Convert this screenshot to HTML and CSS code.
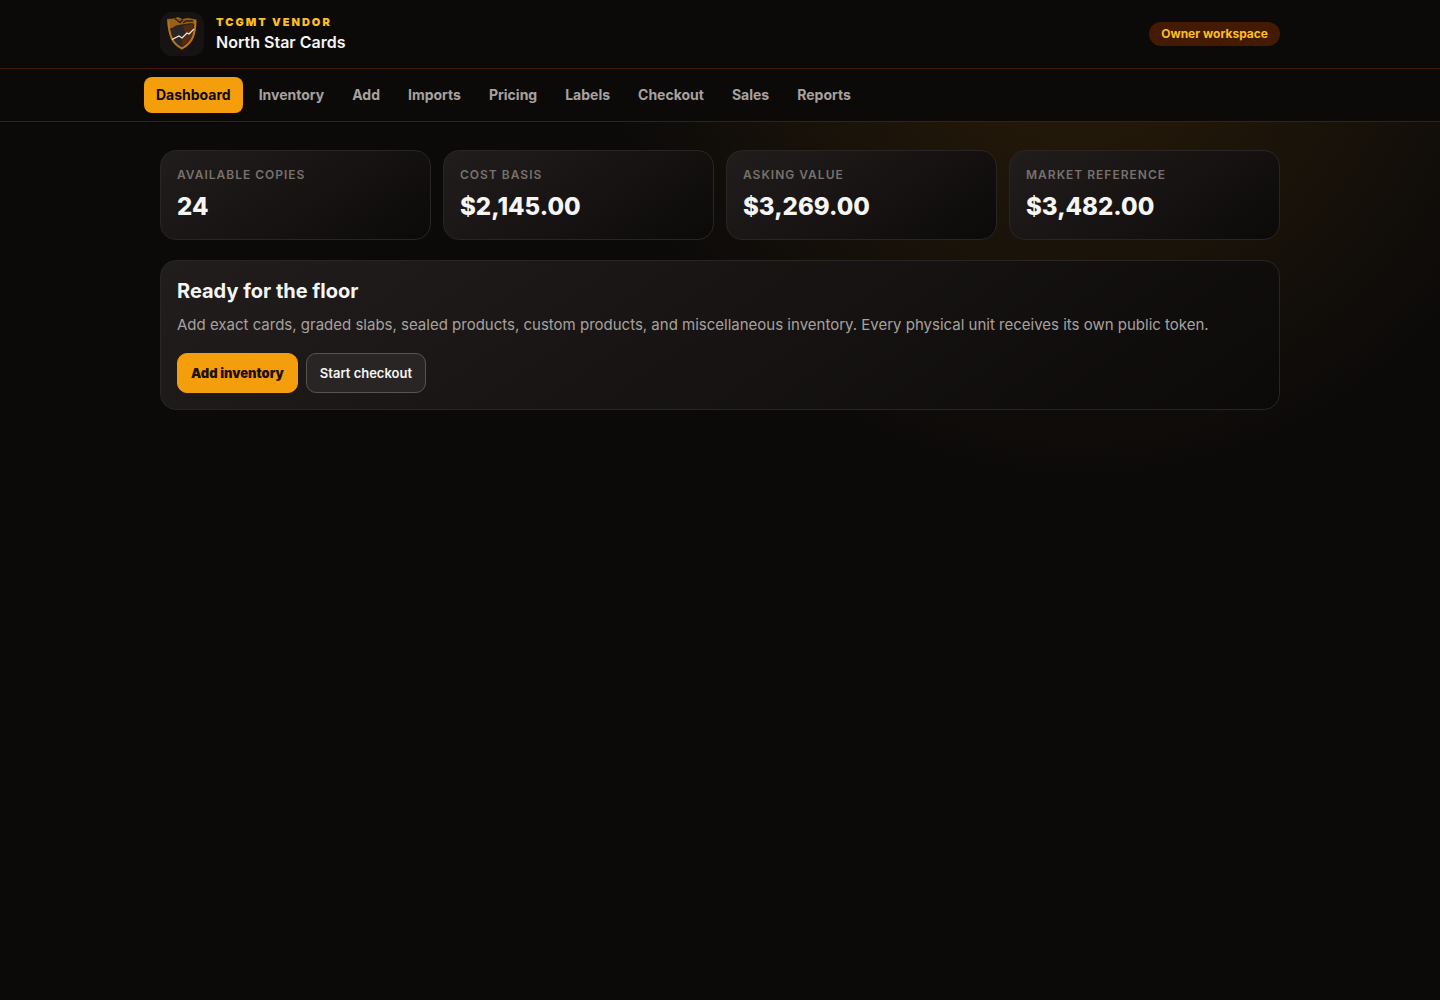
FILE: index.html
```html
<!DOCTYPE html>
<html lang="en">
<head>
<meta charset="utf-8">
<meta name="viewport" content="width=device-width, initial-scale=1">
<title>North Star Cards – TCGMT Vendor</title>
<link rel="stylesheet" href="styles.css">
</head>
<body>
<header class="site-header">
  <div class="container header-row">
    <div class="brand">
      <svg class="logo" viewBox="0 0 44 44" aria-hidden="true">
        <rect width="44" height="44" rx="12" fill="#171312"/>
        <path d="M8 9L21 12 35 9Q36 18 32.500 27 28.500 34 22 37.500 14 33 11 26 8 18 8 9Z" fill="#2b2625"/>
        <path d="M23 14l10-2Q34 22 30 29L22 34 22 25 26 23Z" fill="#532b10"/>
        <path d="M7 7L14 6.500 18 5 22 7 28 6 36.500 7.500 35.500 12 31 11 21 12.500 16 13.500 12 16 8 16Z" fill="#9a6017"/>
        <path d="M8.500 9Q8.500 19 12 27 15 33 22 36.500 30 32 33 25 35.500 18 35.500 8.500" fill="none" stroke="#b67318" stroke-width="2"/>
        <path d="M15 6.500l5 4 3-3M23 11l3-2 7 0" fill="none" stroke="#2b1b10" stroke-width="1.500"/>
        <path d="M12 27.500L19 24 22 26 27 21 29 22 34 17" fill="none" stroke="#eeeae6" stroke-width="1.200"/>
      </svg>
      <div class="brand-text">
        <span class="eyebrow">TCGMT VENDOR</span>
        <span class="shop-name">North Star Cards</span>
      </div>
    </div>
    <span class="badge">Owner workspace</span>
  </div>
</header>
<nav class="site-nav" aria-label="Main">
  <div class="container nav-row">
    <a class="nav-link active" href="#" aria-current="page">Dashboard</a>
    <a class="nav-link" href="#">Inventory</a>
    <a class="nav-link" href="#">Add</a>
    <a class="nav-link" href="#">Imports</a>
    <a class="nav-link" href="#">Pricing</a>
    <a class="nav-link" href="#">Labels</a>
    <a class="nav-link" href="#">Checkout</a>
    <a class="nav-link" href="#">Sales</a>
    <a class="nav-link" href="#">Reports</a>
  </div>
</nav>
<main class="container content">
  <section class="stats" aria-label="Inventory totals">
    <div class="card"><p class="stat-label">AVAILABLE COPIES</p><p class="stat-value">24</p></div>
    <div class="card"><p class="stat-label">COST BASIS</p><p class="stat-value">$2,145.00</p></div>
    <div class="card"><p class="stat-label">ASKING VALUE</p><p class="stat-value">$3,269.00</p></div>
    <div class="card"><p class="stat-label">MARKET REFERENCE</p><p class="stat-value">$3,482.00</p></div>
  </section>
  <section class="card">
    <h1 class="title">Ready for the floor</h1>
    <p class="lead">Add exact cards, graded slabs, sealed products, custom products, and miscellaneous inventory. Every physical unit receives its own public token.</p>
    <div class="actions">
      <button class="button primary" type="button">Add inventory</button>
      <button class="button secondary" type="button">Start checkout</button>
    </div>
  </section>
</main>
</body>
</html>
```
FILE: styles.css
```css
* { box-sizing: border-box; }
body {
  margin: 0;
  min-height: 100vh;
  color: #f5f5f4;
  font-family: Inter, "Liberation Sans", sans-serif;
  font-size: 16px;
  line-height: 24px;
  background: radial-gradient(circle at 75% 0, rgba(245, 158, 11, 0.13), transparent 480px) #0c0a09;
}
p, h1 { margin: 0; }
.container { width: 100%; max-width: 1152px; margin: 0 auto; padding: 0 16px; }
.site-header { background: #0c0a09; border-bottom: 1px solid #451a03; }
.header-row { display: flex; align-items: center; justify-content: space-between; padding-top: 12px; padding-bottom: 12px; }
.brand { display: flex; align-items: center; gap: 12px; }
.logo { width: 44px; height: 44px; }
.brand-text { display: flex; flex-direction: column; }
.eyebrow { color: #fbbf24; font-size: 11px; line-height: 16px; font-weight: 900; letter-spacing: 2px; }
.shop-name { font-weight: 600; }
.badge { padding: 4px 12px; border-radius: 12px; background: #451a03; color: #fbbf24; font-size: 12px; line-height: 16px; font-weight: 700; }
.site-nav { background: #0c0a09; border-bottom: 1px solid #292524; }
.nav-row { display: flex; gap: 4px; padding: 8px 0; }
.nav-link { padding: 8px 12px; border-radius: 8px; color: #a8a29e; font-size: 14px; line-height: 20px; font-weight: 700; text-decoration: none; }
.nav-link.active { background: #f59e0b; color: #0c0a09; }
.content { display: grid; gap: 20px; padding-top: 28px; padding-bottom: 28px; }
.stats { display: grid; grid-template-columns: repeat(4, 1fr); gap: 12px; }
.card { padding: 16px; border: 1px solid #292524; border-radius: 16px; background: linear-gradient(145deg, #211d1c, #0c0a09); }
.stat-label { color: #78716c; font-size: 12px; line-height: 16px; font-weight: 600; letter-spacing: 1px; }
.stat-value { margin-top: 8px; font-size: 24px; line-height: 32px; font-weight: 800; }
.title { font-size: 20px; line-height: 28px; font-weight: 700; }
.lead { margin-top: 8px; color: #a8a29e; font-size: 15px; }
.actions { display: flex; flex-wrap: wrap; gap: 8px; margin-top: 16px; }
.button { min-height: 40px; padding: 0 13px; border: 1px solid; border-radius: 10px; font-family: inherit; font-size: 13px; line-height: 16px; cursor: pointer; }
.primary { border-color: #f59e0b; background: #f59e0b; color: #1c1108; font-weight: 900; }
.secondary { border-color: #57534e; background: #292524; color: #f5f5f4; font-weight: 600; }
@media (max-width: 800px) {
  .stats { grid-template-columns: repeat(2, 1fr); }
  .nav-row { overflow-x: auto; }
}
```
